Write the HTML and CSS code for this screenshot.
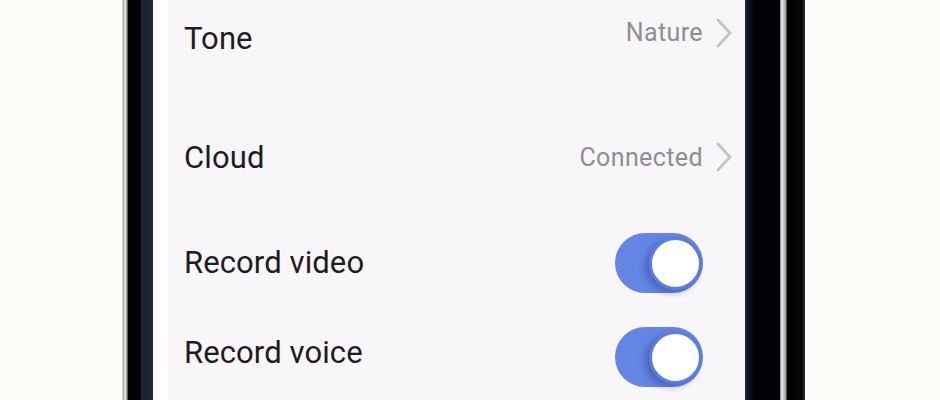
FILE: index.html
```html
<!DOCTYPE html>
<html lang="en">
<head>
<meta charset="utf-8">
<title>Settings</title>
<link rel="stylesheet" href="styles.css">
</head>
<body>
<div class="stage">
  <div class="phone">
    <div class="rim rim-left"></div>
    <div class="frame-left"></div>
    <div class="bezel-left"></div>
    <div class="screen">
      <div class="row link row-first">
        <span class="label">Tone</span>
        <span class="value raised">Nature
          <svg class="chev" viewBox="0 0 18 32" width="18" height="32"><path d="M3 3 L15 16 L3 29" fill="none" stroke="#c4c4c7" stroke-width="2.8" stroke-linecap="round" stroke-linejoin="round"/></svg>
        </span>
      </div>
      <div class="row link row-second">
        <span class="label">Cloud</span>
        <span class="value">Connected
          <svg class="chev" viewBox="0 0 18 32" width="18" height="32"><path d="M3 3 L15 16 L3 29" fill="none" stroke="#c4c4c7" stroke-width="2.8" stroke-linecap="round" stroke-linejoin="round"/></svg>
        </span>
      </div>
      <div class="row switch-row video">
        <span class="label">Record video</span>
        <span class="toggle on"><span class="knob"></span></span>
      </div>
      <div class="row switch-row voice">
        <span class="label">Record voice</span>
        <span class="toggle on"><span class="knob"></span></span>
      </div>
    </div>
    <div class="frame-right"></div>
    <div class="rim rim-right"></div>
    <div class="frame-outer"></div>
  </div>
</div>
</body>
</html>
```
FILE: styles.css
```css
html, body {
  margin: 0;
  padding: 0;
}
body {
  background: #fcfdf8;
  width: 940px;
  height: 400px;
  overflow: hidden;
  font-family: Roboto, "Noto Sans", "Liberation Sans", sans-serif;
}
.stage {
  display: flex;
  height: 400px;
}
.phone {
  display: flex;
  margin-left: 122px;
  height: 400px;
}
.rim-left {
  width: 6px;
  background: linear-gradient(to right, #e4e6e2 0, #a9aca8 30%, #f2f3f0 55%, #8d908c 80%, #3a3c3b 100%);
}
.frame-left {
  width: 25px;
  background: linear-gradient(to right, #000 0, #050607 50%, #1b2231 54%, #1e2637 100%);
}
.bezel-left {
  width: 15px;
  background: #fdfdfd;
}
.screen {
  width: 577px;
  background: #f8f6f8;
  display: flex;
  flex-direction: column;
  padding-left: 16px;
  box-sizing: border-box;
  overflow: hidden;
}
.frame-right {
  width: 35px;
  background: linear-gradient(to right, #1a2131 0, #0c1018 12%, #000 30%, #03050a 100%);
}
.rim-right {
  width: 7px;
  background: linear-gradient(to right, #6e7270 0, #f4f6f3 25%, #c9ccc6 45%, #b3b6b0 75%, #2a2c2b 100%);
}
.frame-outer {
  width: 18px;
  background: linear-gradient(to right, #000 0, #05070a 80%, #2a2e30 100%);
}
.row {
  display: flex;
  align-items: center;
  justify-content: space-between;
  flex-shrink: 0;
}
.link {
  height: 76px;
  padding-right: 12px;
}
.row-second {
  margin-top: 43px;
  margin-bottom: 21px;
}
.switch-row {
  height: 94px;
  padding-right: 42px;
}
.video .label {
  margin-top: -2px;
}
.voice .label {
  margin-top: -9px;
}
.label {
  font-size: 31px;
  color: #1d1d1f;
  letter-spacing: 0.1px;
}
.value {
  display: flex;
  align-items: center;
  gap: 12px;
  font-size: 25px;
  color: #8e8e92;
  letter-spacing: 0.4px;
}
.value.raised {
  margin-top: -11px;
}
.chev {
  display: block;
}
.toggle {
  width: 88px;
  height: 60px;
  border-radius: 30px;
  background: #6585e4;
  display: flex;
  align-items: center;
  justify-content: flex-end;
  padding: 0 1px;
  box-sizing: border-box;
}
.knob {
  width: 53px;
  height: 53px;
  border-radius: 50%;
  background: #fff;
  border: 3px solid #5c7ce2;
  box-sizing: border-box;
  box-shadow: -4px 3px 6px rgba(30, 40, 110, 0.35);
}
```
